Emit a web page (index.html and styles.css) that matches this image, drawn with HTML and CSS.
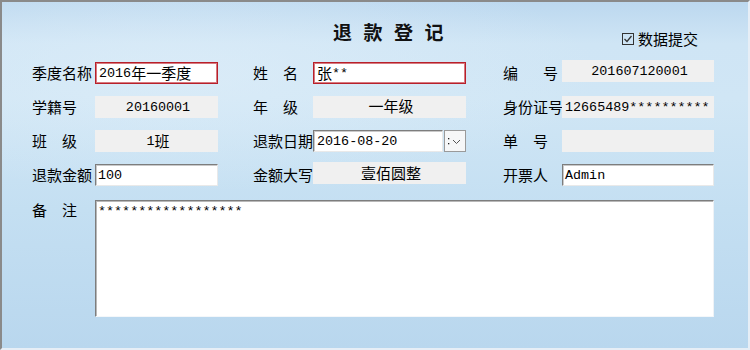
FILE: index.html
```html
<!DOCTYPE html>
<html lang="zh-CN">
<head>
<meta charset="utf-8">
<title>退款登记</title>
<link rel="stylesheet" href="styles.css">
</head>
<body>
<div class="window">
  <header class="head">
    <h1 class="title">退款登记</h1>
    <div class="chk">
      <svg class="box" width="12" height="12" viewBox="0 0 12 12"><rect x="0.5" y="0.5" width="11" height="11" fill="none" stroke="#333" stroke-width="1"/><polyline points="2.5,6 5,8.5 9.5,3" fill="none" stroke="#333" stroke-width="1.3"/></svg>
      <span>数据提交</span>
    </div>
  </header>
  <div class="form">
    <div class="lab">季度名称</div>
    <div class="inp req v">2016<span class="zh">年一季度</span></div>
    <div class="lab c2">姓　名</div>
    <div class="inp req v"><span class="zh">张</span>**</div>
    <div class="lab c3 wide">编　号</div>
    <div class="ro v center up">201607120001</div>

    <div class="lab">学籍号</div>
    <div class="ro v center">20160001</div>
    <div class="lab c2">年　级</div>
    <div class="ro v center"><span class="zh hi">一年级</span></div>
    <div class="lab c3">身份证号</div>
    <div class="ro v">12665489**********</div>

    <div class="lab">班　级</div>
    <div class="ro v center">1<span class="zh">班</span></div>
    <div class="lab c2">退款日期</div>
    <div class="date">
      <div class="inp v dval">2016-08-20</div>
      <div class="dbtn">
        <svg width="20" height="20" viewBox="0 0 20 20"><rect x="3" y="7" width="1.3" height="1.3" fill="#222"/><rect x="3" y="12" width="1.3" height="1.3" fill="#222"/><polyline points="8,9 11.5,12.5 15,9" fill="none" stroke="#555" stroke-width="1"/></svg>
      </div>
    </div>
    <div class="lab c3">单　号</div>
    <div class="ro v"></div>

    <div class="lab">退款金额</div>
    <div class="inp v">100</div>
    <div class="lab c2">金额大写</div>
    <div class="ro v center up"><span class="zh">壹佰圆整</span></div>
    <div class="lab c3">开票人</div>
    <div class="inp v">Admin</div>

    <div class="lab top">备　注</div>
    <div class="memo v">******************</div>
  </div>
</div>
</body>
</html>
```

FILE: styles.css
```css
body {
  margin: 0;
}

.window {
  width: 750px;
  height: 350px;
  box-sizing: border-box;
  border-style: solid;
  border-width: 2px;
  border-color: #8a8a8a #e6eef6 #e6eef6 #8a8a8a;
  background:
    radial-gradient(ellipse 420px 120px at 180px 70px, rgba(226, 240, 250, 0.55), rgba(226, 240, 250, 0)),
    linear-gradient(180deg, #bcd8ef 0%, #cfe5f5 12%, #d0e6f5 28%, #c4dff2 60%, #b9d7ee 100%);
  font-family: "Noto Sans CJK SC", sans-serif;
  color: #000;
}

.head {
  height: 60px;
  display: flex;
  align-items: flex-start;
  padding: 0 50px 0 331px;
}

.title {
  margin: 20px 0 0 0;
  font-size: 19px;
  line-height: 20px;
  font-weight: 700;
  letter-spacing: 11.5px;
  color: #111;
}

.chk {
  margin: 28px 0 0 auto;
  display: flex;
  align-items: center;
  gap: 4px;
  font-size: 15px;
  line-height: 18px;
}

.box {
  display: block;
}

.form {
  display: grid;
  grid-template-columns: 63px 123px 95px 153px 96px 152px;
  grid-template-rows: 22px 22px 22px 22px 119px;
  row-gap: 12px;
  padding-left: 30px;
}

.lab {
  font-size: 15px;
  line-height: 22px;
  white-space: nowrap;
}

.lab.c2 {
  padding-left: 35px;
}

.lab.c3 {
  padding-left: 37px;
}

.lab.wide {
  letter-spacing: 5px;
}

.lab.top {
  align-self: start;
  line-height: 20px;
  margin-top: 2px;
}

.v {
  font-family: "Liberation Mono", "Noto Sans CJK SC", monospace;
  font-size: 13.4px;
  white-space: nowrap;
  overflow: hidden;
  display: flex;
  align-items: center;
  box-sizing: border-box;
}

.zh {
  font-family: "Noto Sans CJK SC", sans-serif;
  font-size: 15px;
  line-height: 18px;
}

.zh.hi {
  line-height: 15px;
  margin-top: -4px;
}

.inp {
  background: #fff;
  border: 1px solid;
  border-color: #7d7d7d #e9e9e9 #e9e9e9 #7d7d7d;
  box-shadow: inset 1px 1px 0 #c9c9c9;
  padding-left: 2px;
}

.inp.req {
  border-color: #b8202a;
  box-shadow: inset 0 0 0 1px #d77a80;
  padding-left: 3px;
}

.ro {
  background: #f0f0f0;
  padding-left: 3px;
}

.ro.center {
  justify-content: center;
}

.ro.up {
  margin-top: -2px;
  margin-bottom: 2px;
}

.date {
  display: flex;
  gap: 1px;
}

.dval {
  flex: 1;
  padding-left: 3px;
}

.dbtn {
  width: 22px;
  box-sizing: border-box;
  border: 1px solid #9a9a9a;
  background: #f6f7f8;
  display: flex;
  align-items: center;
  justify-content: center;
}

.dbtn svg {
  display: block;
}

.memo {
  grid-column: 2 / 7;
  margin-top: 2px;
  height: 117px;
  background: #fff;
  border: 1px solid;
  border-color: #7d7d7d #eef2f6 #f4f7fa #7d7d7d;
  box-shadow: inset 1px 1px 0 #b8b8b8;
  align-items: flex-start;
  padding: 3px 0 0 2px;
  line-height: 16px;
}
```
